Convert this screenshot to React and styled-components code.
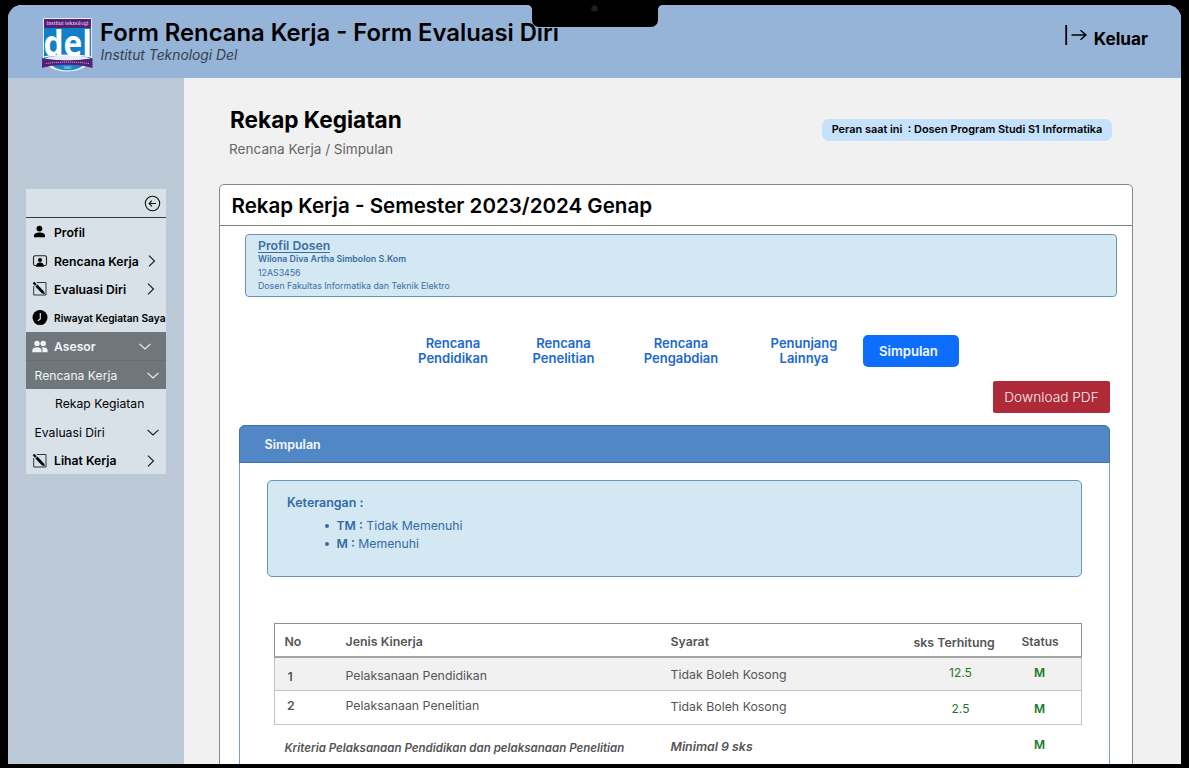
import React from "react";
import styled, { createGlobalStyle, css } from "styled-components";

const Global = createGlobalStyle`
  * { box-sizing: border-box; }
  body { margin: 0; background: #000; font-family: Inter, "Liberation Sans", sans-serif; color: #000; }
`;

const Device = styled.div`
  position: relative;
  width: 1189px;
  height: 768px;
  padding: 5px 8px 4px;
  background: #000;
  overflow: hidden;
`;

const Notch = styled.div`
  position: absolute;
  top: 0;
  left: 532px;
  width: 126px;
  height: 27px;
  border-radius: 0 0 7px 7px;
  background: #000;
  &::before, &::after {
    content: "";
    position: absolute;
    top: 5px;
    width: 4px;
    height: 4px;
  }
  &::before { left: -4px; background: radial-gradient(circle at 0 100%, transparent 3.5px, #000 4px); }
  &::after { right: -4px; background: radial-gradient(circle at 100% 100%, transparent 3.5px, #000 4px); }
`;

const Camera = styled.div`
  position: absolute;
  left: 59px;
  top: 5px;
  width: 7px;
  height: 7px;
  border-radius: 50%;
  border: 1px solid #10171c;
  background: #1a2126;
`;

const Screen = styled.div`
  height: 759px;
  display: flex;
  flex-direction: column;
  border-radius: 14px 14px 0 0;
  overflow: hidden;
  background: #f1f1f1;
`;

const Header = styled.header`
  height: 73px;
  flex: none;
  display: flex;
  padding-left: 34px;
  background: #95b4d8;
`;

const Logo = styled.svg`
  width: 51px;
  height: 54px;
  margin-top: 13px;
  flex: none;
  overflow: visible;
`;

const Brand = styled.div`
  flex: 1;
  padding: 13px 0 0 7px;
`;

const AppTitle = styled.h1`
  margin: 0;
  font-size: 23.8px;
  line-height: 29px;
  font-weight: 600;
  white-space: nowrap;
`;

const Institute = styled.div`
  padding-left: 0.5px;
  font-size: 13.85px;
  line-height: 17px;
  font-style: italic;
  color: #36404c;
`;

const Logout = styled.div`
  display: flex;
  padding-right: 33px;
  font-size: 17.2px;
  line-height: 22px;
  font-weight: 700;
  svg { margin: 18px 6px 0 0; }
  span { margin-top: 23px; }
`;

const Body = styled.div`
  flex: 1;
  min-height: 0;
  display: flex;
`;

const Sidebar = styled.aside`
  width: 176px;
  flex: none;
  padding: 111px 18px 0;
  background: #bccad7;
`;

const Menu = styled.nav`
  height: 285px;
  background: #d8e1e7;
`;

const MenuTop = styled.div`
  height: 29px;
  display: flex;
  justify-content: flex-end;
  align-items: center;
  padding-right: 5.5px;
  border-bottom: 1px solid #323a42;
`;

const MenuRow = styled.div`
  height: 28.5px;
  display: flex;
  align-items: center;
  padding-top: ${(p) => p.$top ?? 1}px;
  padding-left: ${(p) => p.$indent ?? 5.5}px;
  padding-right: ${(p) => p.$end ?? 7.5}px;
  font-size: ${(p) => p.$size ?? 12.2}px;
  font-weight: ${(p) => (p.$sub ? 400 : 600)};
  white-space: nowrap;
  ${(p) => p.$active && css`background: #6f777c; color: #f2f5f7;`}
  ${(p) => p.$line && css`border-bottom: 1px solid #666e73; padding-top: 2px;`}
`;

const MenuIcon = styled.span`
  width: 16px;
  height: 16px;
  flex: none;
  margin-right: 6.5px;
  svg { display: block; }
`;

const MenuLabel = styled.span`
  flex: 1;
`;

const Main = styled.main`
  flex: 1;
  min-width: 0;
  padding: 0 48px 0 35px;
`;

const PageHead = styled.div`
  height: 106px;
  display: flex;
  justify-content: space-between;
  padding: 27px 21px 0 10px;
`;

const PageTitle = styled.h2`
  margin: 0 0 0 1px;
  font-size: 22.6px;
  line-height: 29px;
  font-weight: 700;
`;

const Crumbs = styled.div`
  margin-top: 6px;
  font-size: 13.6px;
  line-height: 18px;
  color: #666;
`;

const RoleBadge = styled.div`
  width: 290px;
  height: 22px;
  margin-top: 14px;
  border-radius: 7px;
  background: #c5e1fb;
  font-size: 10.9px;
  line-height: 21px;
  font-weight: 600;
  text-align: center;
  white-space: pre;
`;

const Card = styled.section`
  height: 600px;
  border: 1px solid #85878a;
  border-radius: 5px 5px 0 0;
  background: #fff;
`;

const CardTitle = styled.h3`
  height: 41px;
  margin: 0;
  padding-left: 11.5px;
  border-bottom: 1px solid #7d7f82;
  font-size: 20.55px;
  line-height: 41px;
  font-weight: 600;
`;

const ProfileBox = styled.div`
  width: 872px;
  height: 63px;
  margin: 8px 0 0 25px;
  padding: 3px 12px;
  border: 1px solid #6794bb;
  border-radius: 4px;
  background: #d4e8f3;
  color: #3a6fa6;
`;

const ProfileHeading = styled.div`
  width: max-content;
  height: 15px;
  margin-bottom: -1px;
  border-bottom: 1px solid #3a6fa6;
  font-size: 12.3px;
  line-height: 15px;
  font-weight: 600;
`;

const ProfileLine = styled.div`
  font-size: 8.8px;
  line-height: 13.6px;
  font-weight: ${(p) => (p.$bold ? 600 : 400)};
`;

const Tabs = styled.div`
  height: 32px;
  display: flex;
  align-items: center;
  margin-top: 38px;
  padding-left: 188px;
`;

const Tab = styled.div`
  width: ${(p) => p.$width}px;
  margin-left: ${(p) => p.$gap ?? 0}px;
  font-size: 13px;
  line-height: 15.5px;
  font-weight: 600;
  text-align: center;
  color: #2069cf;
`;

const ActiveTab = styled.div`
  width: 96px;
  height: 32px;
  margin-left: 16px;
  border-radius: 5px;
  background: #0d6efd;
  color: #f3f8ff;
  font-size: 13.1px;
  line-height: 33px;
  font-weight: 600;
  padding-left: 16px;
`;

const Download = styled.div`
  width: 117px;
  height: 32px;
  margin: 14px 22px 0 auto;
  border-radius: 2px;
  background: #ae2a38;
  color: #fbeef0;
  font-size: 13.7px;
  line-height: 32px;
  font-weight: 300;
  text-align: center;
`;

const Panel = styled.div`
  width: 871px;
  height: 400px;
  margin: 12px 0 0 19px;
  border: 1px solid #7c9dbd;
  border-radius: 6px 6px 0 0;
`;

const PanelHead = styled.div`
  height: 38px;
  margin: -1px -1px 0;
  padding-left: 24.5px;
  border: 1px solid #4572a8;
  border-radius: 6px 6px 0 0;
  background: #5287c6;
  color: #f4f8fc;
  font-size: 12.5px;
  line-height: 37px;
  font-weight: 600;
`;

const Legend = styled.div`
  width: 815px;
  height: 97px;
  margin: 17px 0 0 27px;
  padding: 13px 19px;
  border: 1px solid #6794bb;
  border-radius: 5px;
  background: #d4e8f3;
  color: #336aa5;
  font-size: 12.25px;
  line-height: 18.5px;
  b { font-weight: 600; }
`;

const LegendTitle = styled.div`
  font-size: 12.45px;
  font-weight: 600;
`;

const LegendList = styled.ul`
  margin: 4px 0 0;
  padding: 0 0 0 38px;
  list-style: none;
`;

const LegendItem = styled.li`
  display: flex;
  align-items: center;
  &::before {
    content: "";
    width: 4px;
    height: 4px;
    margin-right: 7.5px;
    border-radius: 50%;
    background: #336aa5;
  }
  span { white-space: pre; }
`;

const Table = styled.div`
  width: 808px;
  margin: 46px 0 0 34px;
  color: #555;
`;

const Row = styled.div`
  display: grid;
  grid-template-columns: 70.5px 325px 237px 98px 1fr;
  height: ${(p) => p.$height}px;
  border: 1px solid #c3c3c3;
  border-top: 0;
  ${(p) => p.$head && css`border: 1px solid #919191; border-bottom-width: 2px; border-bottom-color: #a5a5a5; font-weight: 600;`}
  ${(p) => p.$shade && css`background: #f1f1f1;`}
  ${(p) => p.$summary && css`border-color: transparent; font-style: italic; font-weight: 600;`}
`;

const Cell = styled.div`
  height: 20px;
  margin-top: ${(p) => p.$top ?? 0}px;
  padding-left: ${(p) => p.$left ?? 0}px;
  line-height: 20px;
  font-size: ${(p) => p.$size ?? 12.35}px;
  white-space: nowrap;
  font-weight: ${(p) => p.$weight ?? "inherit"};
  ${(p) => p.$center && css`text-align: center;`}
  ${(p) => p.$green && css`color: #187a27; font-style: normal; font-size: 12px;`}
`;

const PersonIcon = () => (
  <svg width="16" height="16" viewBox="0 0 16 16">
    <circle cx="7.4" cy="4.6" r="2.9" />
    <path d="M2 13.2v-1.5c0-2.200 2.500-3.200 5.500-3.200s5.500 1 5.500 3.200v1.500z" />
  </svg>
);

const BadgeIcon = () => (
  <svg width="16" height="16" viewBox="0 0 16 16" fill="none" stroke="#20262b" strokeWidth="1.1">
    <path d="M4.200 12.500h-1.500a1.500 1.500 0 0 1-1.200-1.500V4.200a1.500 1.500 0 0 1 1.500-1.500h10a1.500 1.500 0 0 1 1.500 1.500v6.800a1.500 1.500 0 0 1-1.200 1.500h-1.500" />
    <circle cx="8" cy="6.900" r="2" fill="#000" stroke="none" />
    <path d="M4 13.700c0-3 1.600-4.200 4-4.200s4 1.200 4 4.200z" fill="#000" stroke="none" />
  </svg>
);

const PencilBoxIcon = () => (
  <svg width="16" height="16" viewBox="0 0 16 16" fill="none" stroke="#30373c" strokeWidth="1">
    <path d="M4.800 1.500h9.200v12.500H1.700V5" />
    <path d="M1.500 1.500 3.800 3.900" stroke="#000" strokeWidth="2.200" />
    <path d="M4.400 4.500l6.600 7" stroke="#000" strokeWidth="2.700" />
    <path d="M10 12.300l2.800 1-.7-2.800z" fill="#000" stroke="none" />
  </svg>
);

const ClockIcon = () => (
  <svg width="16" height="16" viewBox="0 0 16 16" fill="none">
    <circle cx="8" cy="7.600" r="7.500" fill="#000" />
    <path d="M8.300 3v6L5.800 10.700" stroke="#d8e1e7" strokeWidth="1.200" />
  </svg>
);

const PeopleIcon = () => (
  <svg width="16" height="16" viewBox="0 0 16 16" fill="#f2f5f7">
    <circle cx="5" cy="4.400" r="2.700" />
    <circle cx="11.200" cy="4.400" r="2.700" />
    <path d="M.4 13.200v-2c0-1.900 2-2.900 4.500-2.900s4.500 1 4.500 2.900v2z" />
    <path d="M10.400 13.200h5.200v-2c0-1.900-2.100-2.900-4.500-2.900-.6 0-1 0-1.400.2.700.7.800 1.700.7 2.700z" />
  </svg>
);

const Chevron = ({ down, color = "#15191c" }) => (
  <svg width={down ? 12 : 8} height={down ? 7 : 12} fill="none" stroke={color} strokeWidth="1.1">
    <path d={down ? "M.5.8 6 6l5.500-5.200" : "M1 .7l5.500 5.300L1 11.300"} />
  </svg>
);

const CollapseIcon = () => (
  <svg width="17" height="17" viewBox="0 0 17 17" fill="none" stroke="#111" strokeWidth="1.1">
    <circle cx="8.5" cy="8.5" r="7.2" />
    <path d="M12 8.500H5.200M7.900 5.700 5.100 8.500l2.800 2.800" />
  </svg>
);

const LogoutIcon = () => (
  <svg width="24" height="22" viewBox="0 0 24 22" fill="none" stroke="#000">
    <path d="M2.200 2v20" strokeWidth="1.800" />
    <path d="M7.500 12h14.500M16.500 7.200l5.500 4.800-5.500 4.800" strokeWidth="1.400" />
  </svg>
);

const DelLogo = () => (
  <Logo viewBox="0 0 51 54">
    <path d="M2 0h46a2 2 0 0 1 2 2v38c0 8-13 13.500-25 13.500S1 48 1 40V2a2 2 0 0 1 1-2z" fill="#e8edf5" />
    <path d="M2 10h47v31c-9-5-36-5-47 0z" fill="#1280c8" />
    <path d="M2 1h47v9H2z" fill="#522177" />
    <text x="25.5" y="7.4" textAnchor="middle" fontFamily="Liberation Serif, serif" fontSize="6.3" textLength="42" fill="#e6dcee">institut teknologi</text>
    <text x="1.500" y="37.500" fontFamily="Open Sans, sans-serif" fontWeight="700" fontSize="35" textLength="48.500" lengthAdjust="spacingAndGlyphs" fill="#fff">del</text>
    <path d="M2 39c10-2.500 35-2.500 47 0" stroke="#fff" strokeWidth="1.200" fill="none" />
    <path d="M9 46c6-2.500 27-2.500 33 0-3 4.500-10 6.300-16.500 6.300S12 50.500 9 46z" fill="#1a85c8" />
    <path d="M0 40c13 3 38 3 50.500 0v10c-13-4.500-37-4.500-50.500 0z" fill="#522177" />
    <path d="M4 45.600c12-2 32-2 43 0" stroke="#b9a3cc" strokeWidth="1" strokeDasharray="1.200 .8" fill="none" />
    <text x="25.5" y="51" textAnchor="middle" fontFamily="Liberation Serif, serif" fontSize="4" fill="#e8f2fa">2001</text>
  </Logo>
);

export default function App() {
  return (
    <>
      <Global />
      <Device>
        <Screen>
          <Header>
            <DelLogo />
            <Brand>
              <AppTitle>Form Rencana Kerja - Form Evaluasi Diri</AppTitle>
              <Institute>Institut Teknologi Del</Institute>
            </Brand>
            <Logout><LogoutIcon /><span>Keluar</span></Logout>
          </Header>
          <Body>
            <Sidebar>
              <Menu>
                <MenuTop><CollapseIcon /></MenuTop>
                <MenuRow $top={0}><MenuIcon><PersonIcon /></MenuIcon><MenuLabel>Profil</MenuLabel></MenuRow>
                <MenuRow $end={10}><MenuIcon><BadgeIcon /></MenuIcon><MenuLabel>Rencana Kerja</MenuLabel><Chevron /></MenuRow>
                <MenuRow $top={0} $end={11}><MenuIcon><PencilBoxIcon /></MenuIcon><MenuLabel>Evaluasi Diri</MenuLabel><Chevron /></MenuRow>
                <MenuRow $top={0} $size={10.2} $end={0}><MenuIcon><ClockIcon /></MenuIcon><MenuLabel>Riwayat Kegiatan Saya</MenuLabel></MenuRow>
                <MenuRow $active $line $end={15.5}><MenuIcon><PeopleIcon /></MenuIcon><MenuLabel>Asesor</MenuLabel><Chevron down color="#f2f5f7" /></MenuRow>
                <MenuRow $active $sub $indent={8.5}><MenuLabel>Rencana Kerja</MenuLabel><Chevron down color="#f2f5f7" /></MenuRow>
                <MenuRow $sub $indent={29}><MenuLabel>Rekap Kegiatan</MenuLabel></MenuRow>
                <MenuRow $sub $indent={8.5}><MenuLabel>Evaluasi Diri</MenuLabel><Chevron down /></MenuRow>
                <MenuRow $end={11}><MenuIcon><PencilBoxIcon /></MenuIcon><MenuLabel>Lihat Kerja</MenuLabel><Chevron /></MenuRow>
              </Menu>
            </Sidebar>
            <Main>
              <PageHead>
                <div>
                  <PageTitle>Rekap Kegiatan</PageTitle>
                  <Crumbs>Rencana Kerja / Simpulan</Crumbs>
                </div>
                <RoleBadge>{"Peran saat ini  : Dosen Program Studi S1 Informatika"}</RoleBadge>
              </PageHead>
              <Card>
                <CardTitle>Rekap Kerja - Semester 2023/2024 Genap</CardTitle>
                <ProfileBox>
                  <ProfileHeading>Profil Dosen</ProfileHeading>
                  <ProfileLine $bold>Wilona Diva Artha Simbolon S.Kom</ProfileLine>
                  <ProfileLine>12AS3456</ProfileLine>
                  <ProfileLine>Dosen Fakultas Informatika dan Teknik Elektro</ProfileLine>
                </ProfileBox>
                <Tabs>
                  <Tab $width={90}>Rencana<br />Pendidikan</Tab>
                  <Tab $width={131}>Rencana<br />Penelitian</Tab>
                  <Tab $width={104}>Rencana<br />Pengabdian</Tab>
                  <Tab $width={86} $gap={28}>Penunjang<br />Lainnya</Tab>
                  <ActiveTab>Simpulan</ActiveTab>
                </Tabs>
                <Download>Download PDF</Download>
                <Panel>
                  <PanelHead>Simpulan</PanelHead>
                  <Legend>
                    <LegendTitle>Keterangan :</LegendTitle>
                    <LegendList>
                      <LegendItem><span><b>TM :</b> Tidak Memenuhi</span></LegendItem>
                      <LegendItem><span><b>M :</b> Memenuhi</span></LegendItem>
                    </LegendList>
                  </Legend>
                  <Table>
                    <Row $head $height={35}>
                      <Cell $left={9.5} $top={8}>No</Cell>
                      <Cell $top={8}>Jenis Kinerja</Cell>
                      <Cell $top={8}>Syarat</Cell>
                      <Cell $top={8.5} $left={6}>sks Terhitung</Cell>
                      <Cell $top={8} $left={16} $size={12}>Status</Cell>
                    </Row>
                    <Row $shade $height={33}>
                      <Cell $left={12.5} $top={9} $weight={600}>1</Cell>
                      <Cell $top={8}>Pelaksanaan Pendidikan</Cell>
                      <Cell $top={7}>Tidak Boleh Kosong</Cell>
                      <Cell $top={5} $left={8} $center $green>12.5</Cell>
                      <Cell $top={5} $left={28.5} $green $weight={600}>M</Cell>
                    </Row>
                    <Row $height={34}>
                      <Cell $left={12} $top={5} $weight={600}>2</Cell>
                      <Cell $top={5}>Pelaksanaan Penelitian</Cell>
                      <Cell $top={5.5}>Tidak Boleh Kosong</Cell>
                      <Cell $top={8} $left={8} $center $green>2.5</Cell>
                      <Cell $top={8} $left={28.5} $green $weight={600}>M</Cell>
                    </Row>
                    <Row $summary $height={40}>
                      <Cell $left={9.5} $top={13} $size={11.5}>Kriteria Pelaksanaan Pendidikan dan pelaksanaan Penelitian</Cell>
                      <Cell />
                      <Cell $top={12}>Minimal 9 sks</Cell>
                      <Cell />
                      <Cell $top={10} $left={28.5} $green>M</Cell>
                    </Row>
                  </Table>
                </Panel>
              </Card>
            </Main>
          </Body>
        </Screen>
        <Notch><Camera /></Notch>
      </Device>
    </>
  );
}
